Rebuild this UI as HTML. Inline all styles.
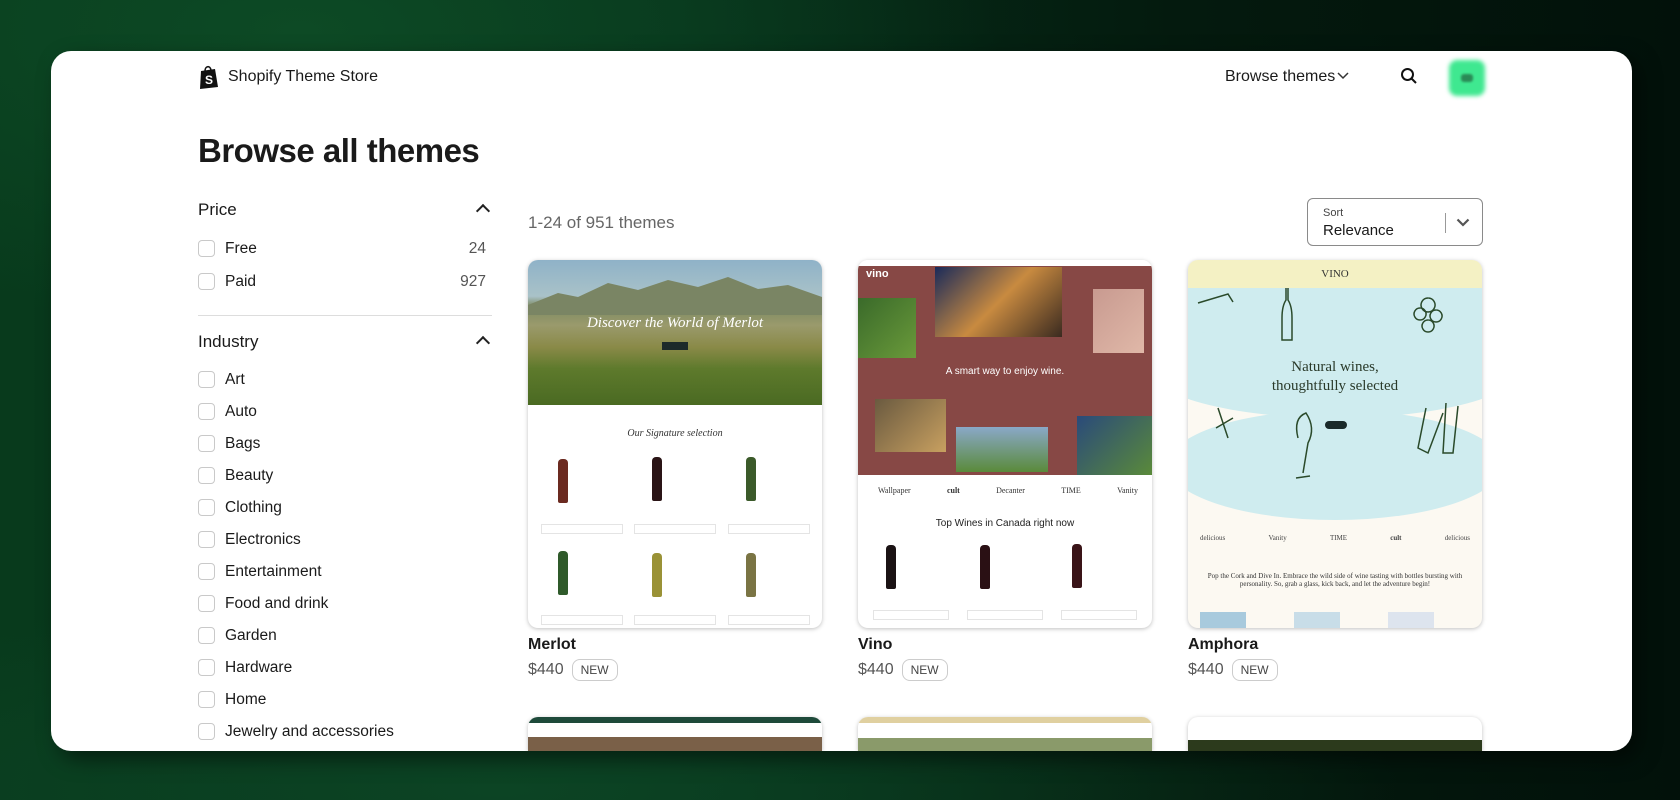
<!DOCTYPE html>
<html style="width:1680px;height:800px;overflow:hidden"><head><meta charset="utf-8"><style>
*{box-sizing:border-box;margin:0;padding:0}
body{width:1680px;height:800px;overflow:hidden;font-family:"Liberation Sans",sans-serif;color:#1a1a1a;
background:radial-gradient(ellipse 700px 300px at 300px 30px,#0d4a25 0%,rgba(13,74,37,0) 100%),radial-gradient(ellipse 900px 200px at 500px 790px,#0c4424 0%,rgba(12,68,36,0) 100%),linear-gradient(90deg,#083a1c 0%,#06301a 40%,#041a0e 70%,#02110a 100%);position:relative}
.card{position:absolute;left:51px;top:51px;width:1581px;height:700px;background:#fff;border-radius:20px;overflow:hidden;box-shadow:8px 8px 20px rgba(0,0,0,.5)}
.a{position:absolute}
.logo{left:147px;top:14px;font-size:16px;display:flex;align-items:center;gap:8px;height:24px}
.nav{font-size:16px}
.h1{left:147px;top:81px;font-size:33px;font-weight:bold;letter-spacing:-.5px}
.sec{font-size:17px}
.chev{width:10px;height:10px;border-left:2px solid #222;border-top:2px solid #222;transform:rotate(45deg)}
.cb{width:17px;height:17px;border:1px solid #c9c9c9;border-radius:4px}
.lbl{font-size:15.5px}
.cnt{font-size:15.5px;color:#555;text-align:right;width:60px}
.thumb{position:absolute;width:294px;height:368px;border-radius:10px;overflow:hidden;box-shadow:0 1px 4px rgba(0,0,0,.25);background:#fff}
.name{font-size:16px;font-weight:bold}
.price{font-size:16px;color:#555;display:flex;align-items:center;gap:8px}
.new{font-size:12px;border:1px solid #ccc;border-radius:8px;padding:3px 8px;color:#444}
.bt{position:absolute;width:10px;height:44px;border-radius:4px 4px 2px 2px}
.btn{position:absolute;height:10px;border:1px solid #e4e4e4;width:82px}
</style></head><body>
<div class="card">
 <div class="a logo"><svg width="22" height="24" viewBox="0 0 22 24"><path d="M3 6 L17 4 L20 22 L2 24 Z" fill="#111"/><path d="M7 6 C7 1 12 0 13 5" stroke="#111" stroke-width="1.6" fill="none"/><text x="7" y="19" font-size="12" font-weight="bold" fill="#fff" font-family="Liberation Sans">S</text></svg><span>Shopify Theme Store</span></div>
 <div class="a nav" style="left:1174px;top:17px">Browse themes</div>
 <svg class="a" style="left:1286px;top:21px" width="12" height="8"><path d="M1 1 L6 6 L11 1" stroke="#333" stroke-width="1.5" fill="none"/></svg>
 <svg class="a" style="left:1349px;top:16px" width="18" height="18"><circle cx="7.5" cy="7.5" r="5.5" stroke="#111" stroke-width="2" fill="none"/><path d="M11.5 11.5 L16 16" stroke="#111" stroke-width="2"/></svg>
 <div class="a" style="left:1398px;top:9px;width:36px;height:36px;background:#3fe890;border-radius:8px;filter:blur(2px)"></div>
 <div class="a" style="left:1410px;top:23px;width:12px;height:8px;background:#2a8a56;border-radius:3px;filter:blur(1px)"></div>
 <div class="a h1">Browse all themes</div>

 <div class="a sec" style="left:147px;top:149px">Price</div><div class="a chev" style="left:427px;top:155px"></div>
 <div class="a cb" style="left:147px;top:189px"></div><div class="a lbl" style="left:174px;top:189px">Free</div><div class="a cnt" style="left:375px;top:189px">24</div>
 <div class="a cb" style="left:147px;top:222px"></div><div class="a lbl" style="left:174px;top:222px">Paid</div><div class="a cnt" style="left:375px;top:222px">927</div>
 <div class="a" style="left:147px;top:264px;width:294px;height:1px;background:#ddd"></div>
 <div class="a sec" style="left:147px;top:281px">Industry</div><div class="a chev" style="left:427px;top:287px"></div>
 <div class="a cb" style="left:147px;top:320px"></div><div class="a lbl" style="left:174px;top:320px">Art</div>
 <div class="a cb" style="left:147px;top:352px"></div><div class="a lbl" style="left:174px;top:352px">Auto</div>
 <div class="a cb" style="left:147px;top:384px"></div><div class="a lbl" style="left:174px;top:384px">Bags</div>
 <div class="a cb" style="left:147px;top:416px"></div><div class="a lbl" style="left:174px;top:416px">Beauty</div>
 <div class="a cb" style="left:147px;top:448px"></div><div class="a lbl" style="left:174px;top:448px">Clothing</div>
 <div class="a cb" style="left:147px;top:480px"></div><div class="a lbl" style="left:174px;top:480px">Electronics</div>
 <div class="a cb" style="left:147px;top:512px"></div><div class="a lbl" style="left:174px;top:512px">Entertainment</div>
 <div class="a cb" style="left:147px;top:544px"></div><div class="a lbl" style="left:174px;top:544px">Food and drink</div>
 <div class="a cb" style="left:147px;top:576px"></div><div class="a lbl" style="left:174px;top:576px">Garden</div>
 <div class="a cb" style="left:147px;top:608px"></div><div class="a lbl" style="left:174px;top:608px">Hardware</div>
 <div class="a cb" style="left:147px;top:640px"></div><div class="a lbl" style="left:174px;top:640px">Home</div>
 <div class="a cb" style="left:147px;top:672px"></div><div class="a lbl" style="left:174px;top:672px">Jewelry and accessories</div>

 <div class="a" style="left:477px;top:162px;font-size:17px;color:#666">1-24 of 951 themes</div>
 <div class="a" style="left:1256px;top:147px;width:176px;height:48px;border:1px solid #8a8a8a;border-radius:6px">
  <div class="a" style="left:15px;top:8px;font-size:11px;color:#444">Sort</div>
  <div class="a" style="left:15px;top:23px;font-size:15px">Relevance</div>
  <div class="a" style="left:137px;top:14px;width:1px;height:20px;background:#999"></div>
  <svg class="a" style="left:148px;top:19px" width="14" height="9"><path d="M1.5 1.5 L7 7 L12.5 1.5" stroke="#555" stroke-width="2.2" fill="none"/></svg>
 </div>

 <div class="thumb" style="left:477px;top:209px">
  <div class="a" style="left:0;top:0;width:294px;height:145px;background:linear-gradient(180deg,#8fb2c8 0%,#a9c2c8 25%,#7d8a62 32%,#9a9a6c 45%,#8a8a48 60%,#5e7a2c 75%,#4a6a22 100%)"></div>
  <svg class="a" style="left:0;top:15px" width="294" height="40"><path d="M0 30 L30 18 L50 22 L80 8 L110 15 L140 5 L170 12 L200 2 L230 14 L260 10 L294 22 L294 40 L0 40Z" fill="#7a8564"/></svg>
  <div class="a" style="left:0;top:55px;width:294px;text-align:center;font-family:'Liberation Serif',serif;font-style:italic;color:#fff;font-size:15px">Discover the World of Merlot</div>
  <div class="a" style="left:134px;top:82px;width:26px;height:8px;background:#1d2a2a"></div>
  <div class="a" style="left:0;top:168px;width:294px;text-align:center;font-family:'Liberation Serif',serif;font-style:italic;font-size:10px;color:#333">Our Signature selection</div>
  <div class="bt" style="left:30px;top:199px;background:#6b2a20"></div><div class="bt" style="left:124px;top:197px;background:#2a1416"></div><div class="bt" style="left:218px;top:197px;background:#3b5a2a"></div>
  <div class="bt" style="left:30px;top:291px;background:#2f5a2a"></div><div class="bt" style="left:124px;top:293px;background:#9a9236"></div><div class="bt" style="left:218px;top:293px;background:#7a7444"></div>
  <div class="btn" style="left:13px;top:264px"></div><div class="btn" style="left:106px;top:264px"></div><div class="btn" style="left:200px;top:264px"></div>
  <div class="btn" style="left:13px;top:355px"></div><div class="btn" style="left:106px;top:355px"></div><div class="btn" style="left:200px;top:355px"></div>
 </div>
 <div class="a name" style="left:477px;top:585px">Merlot</div>
 <div class="a price" style="left:477px;top:608px"><span>$440</span><span class="new">NEW</span></div>

 <div class="thumb" style="left:807px;top:209px">
  <div class="a" style="left:0;top:0;width:294px;height:6px;background:#fff"></div>
  <div class="a" style="left:0;top:6px;width:294px;height:209px;background:#874845"></div>
  <div class="a" style="left:8px;top:8px;color:#fff;font-weight:bold;font-size:11px">vino</div>
  <div class="a" style="left:77px;top:7px;width:127px;height:70px;background:linear-gradient(135deg,#1a2a5a,#c88a40 50%,#3a2a20)"></div>
  <div class="a" style="left:0;top:38px;width:58px;height:60px;background:linear-gradient(135deg,#3a6a2a,#6a9a3a)"></div>
  <div class="a" style="left:235px;top:29px;width:51px;height:64px;background:linear-gradient(135deg,#c89a90,#e0b8a8)"></div>
  <div class="a" style="left:0;top:106px;width:294px;text-align:center;color:#fff;font-size:10px">A smart way to enjoy wine.</div>
  <div class="a" style="left:17px;top:139px;width:71px;height:53px;background:linear-gradient(135deg,#6a5a40,#c8a060)"></div>
  <div class="a" style="left:98px;top:167px;width:92px;height:45px;background:linear-gradient(180deg,#8aa8c8,#5a8a3a)"></div>
  <div class="a" style="left:219px;top:156px;width:75px;height:59px;background:linear-gradient(135deg,#2a4a7a,#5a8a3a)"></div>
  <div class="a" style="left:20px;top:226px;font-size:8px;color:#333;width:260px;display:flex;justify-content:space-between;font-family:'Liberation Serif',serif"><span>Wallpaper</span><b>cult</b><span>Decanter</span><span>TIME</span><span>Vanity</span></div>
  <div class="a" style="left:0;top:258px;width:294px;text-align:center;font-size:10px;color:#222">Top Wines in Canada right now</div>
  <div class="bt" style="left:28px;top:285px;background:#1a1214"></div><div class="bt" style="left:122px;top:285px;background:#2a1014"></div><div class="bt" style="left:214px;top:284px;background:#3a1418"></div>
  <div class="btn" style="left:15px;top:350px;width:76px"></div><div class="btn" style="left:109px;top:350px;width:76px"></div><div class="btn" style="left:203px;top:350px;width:76px"></div>
 </div>
 <div class="a name" style="left:807px;top:585px">Vino</div>
 <div class="a price" style="left:807px;top:608px"><span>$440</span><span class="new">NEW</span></div>

 <div class="thumb" style="left:1137px;top:209px;background:#fcf9f2">
  <div class="a" style="left:0;top:0;width:294px;height:28px;background:#f4f1c4"></div>
  <div class="a" style="left:0;top:8px;width:294px;text-align:center;font-family:'Liberation Serif',serif;font-size:11px;color:#333">VINO</div>
  <div class="a" style="left:0;top:28px;width:294px;height:52px;background:#cfecef"></div>
  <div class="a" style="left:-40px;top:58px;width:374px;height:100px;background:#cfecef;border-radius:50%"></div>
  <div class="a" style="left:-20px;top:150px;width:334px;height:110px;background:#cfecef;border-radius:50%"></div>
  <div class="a" style="left:0;top:98px;width:294px;text-align:center;font-family:'Liberation Serif',serif;font-size:15px;color:#2a3a2a;line-height:19px">Natural wines,<br>thoughtfully selected</div>
  <div class="a" style="left:137px;top:161px;width:22px;height:8px;background:#1a2a2a;border-radius:4px"></div>
  <svg class="a" style="left:0;top:28px" width="294" height="200" fill="none" stroke="#2a4a2a" stroke-width="1.5"><path d="M100 0 L100 12 Q104 18 104 30 L104 52 L94 52 L94 30 Q94 18 98 12 L98 0"/><path d="M10 15 L40 6 L45 14"/><path d="M240 10 a7 7 0 1 0 .1 0 M232 20 a6 6 0 1 0 .1 0 M248 22 a6 6 0 1 0 .1 0 M240 32 a6 6 0 1 0 .1 0"/><path d="M30 120 L40 150 M28 140 L45 130"/><path d="M110 150 Q105 130 118 125 Q128 140 120 155 L115 185 M108 190 L122 188"/><path d="M238 120 L230 160 L240 165 L255 125 M258 115 L255 165 L265 165 L270 118"/></svg>
  <div class="a" style="left:12px;top:274px;font-size:7px;color:#444;width:270px;display:flex;justify-content:space-between;font-family:'Liberation Serif',serif"><span>delicious</span><span>Vanity</span><span>TIME</span><b>cult</b><span>delicious</span></div>
  <div class="a" style="left:12px;top:312px;width:270px;text-align:center;font-family:'Liberation Serif',serif;font-size:7px;color:#333">Pop the Cork and Dive In. Embrace the wild side of wine tasting with bottles bursting with personality. So, grab a glass, kick back, and let the adventure begin!</div>
  <div class="a" style="left:12px;top:352px;width:46px;height:16px;background:#a8cadd"></div>
  <div class="a" style="left:106px;top:352px;width:46px;height:16px;background:#c8dde8"></div>
  <div class="a" style="left:200px;top:352px;width:46px;height:16px;background:#dde4ee"></div>
 </div>
 <div class="a name" style="left:1137px;top:585px">Amphora</div>
 <div class="a price" style="left:1137px;top:608px"><span>$440</span><span class="new">NEW</span></div>

 <div class="thumb" style="left:477px;top:666px;height:34px;border-radius:10px 10px 0 0"><div class="a" style="left:0;top:0;width:294px;height:6px;background:#1e4a3a"></div><div class="a" style="left:0;top:20px;width:294px;height:20px;background:#7a6048"></div></div>
 <div class="thumb" style="left:807px;top:666px;height:34px;border-radius:10px 10px 0 0"><div class="a" style="left:0;top:0;width:294px;height:6px;background:#e0d0a0"></div><div class="a" style="left:0;top:21px;width:294px;height:20px;background:#8a9a6a"></div></div>
 <div class="thumb" style="left:1137px;top:666px;height:34px;border-radius:10px 10px 0 0"><div class="a" style="left:0;top:23px;width:294px;height:20px;background:#2c3a1c"></div></div>
</div>
</body></html>
